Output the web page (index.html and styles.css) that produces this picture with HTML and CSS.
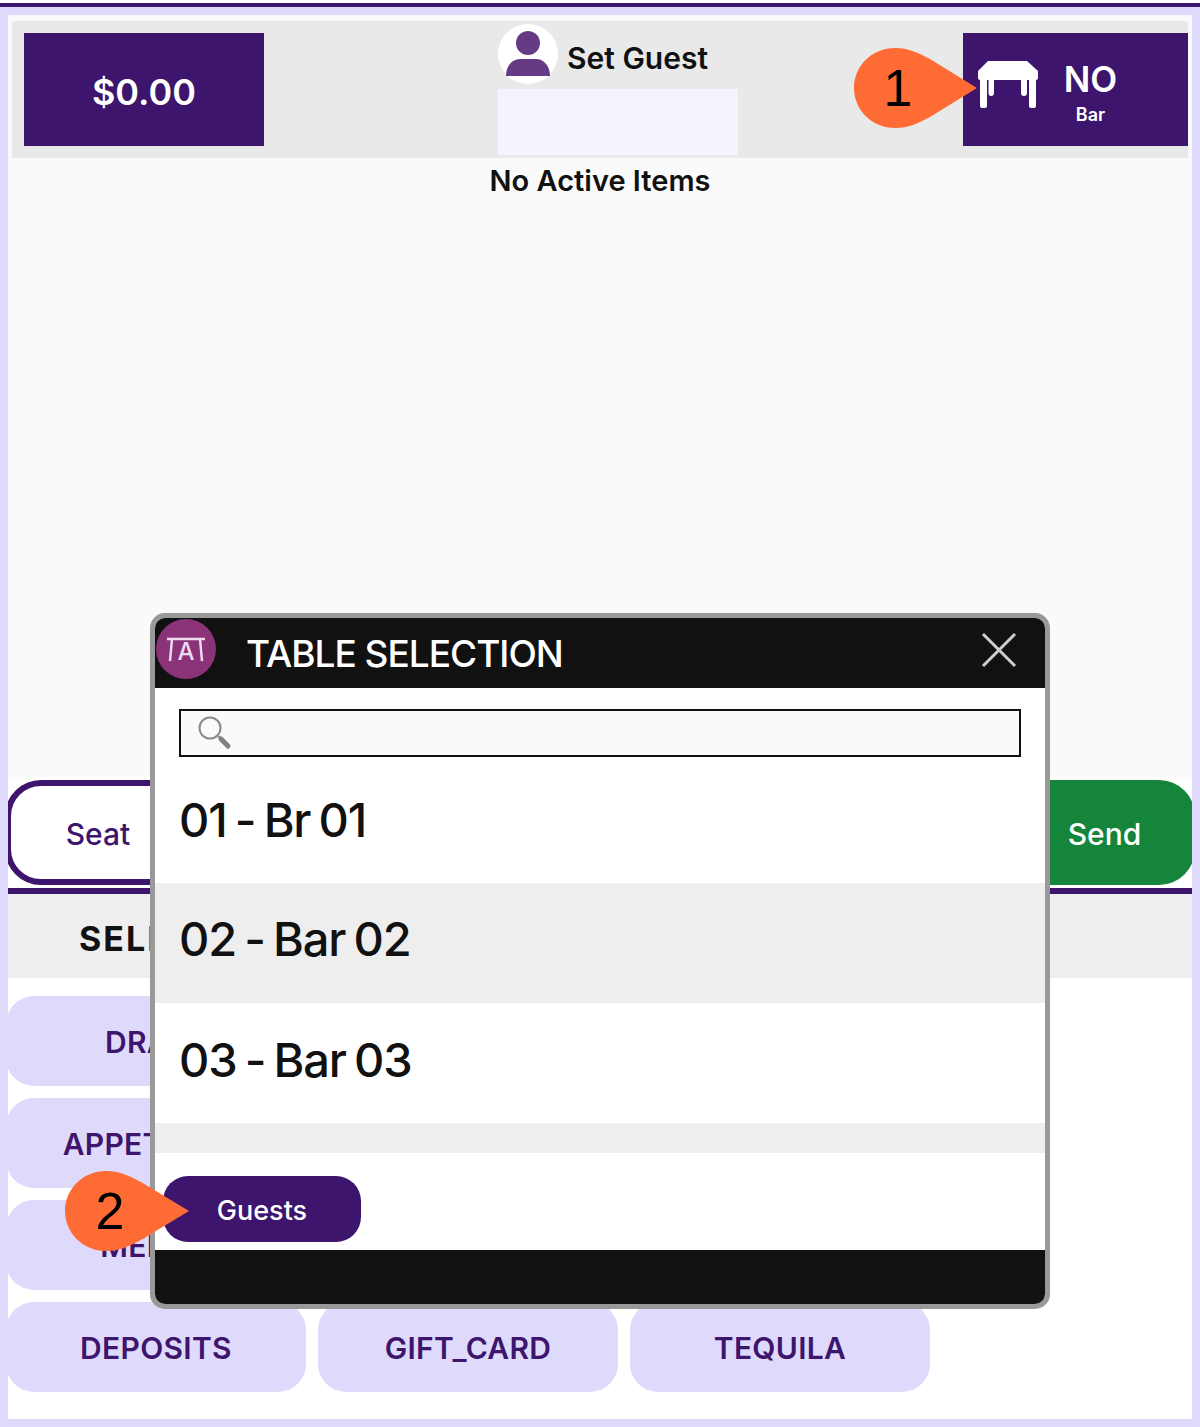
FILE: index.html
```html
<!DOCTYPE html>
<html lang="en">
	<head>
		<meta charset="UTF-8">
		<meta name="viewport" content="width=device-width, initial-scale=1.0">
		<title>Table Selection</title>
		<link rel="stylesheet" href="styles.css">
	</head>
	<body>
		<div class="frame">
			<div class="top">
				<div class="price">$0.00</div>
				<div class="guest">
					<div class="guest-head">
						<div class="guest-pic">
							<svg width="60" height="60" viewBox="0 0 60 60">
								<circle cx="30" cy="19" r="12" fill="#673a85"/>
								<path d="M8 52C8 41 15 35 22 35H38C45 35 52 41 52 52Z" fill="#673a85"/>
							</svg>
						</div>
						<span class="guest-name">Set Guest</span>
					</div>
					<div class="guest-box"></div>
				</div>
				<div class="table-btn">
					<svg width="60" height="47" viewBox="0 0 60 47">
						<path d="M10 0H49L60 10V17Q60 19 58 19H2Q0 19 0 17V10Z" fill="#fff"/>
						<path d="M2 19H9V45Q9 47 7 47H4Q2 47 2 45Z" fill="#fff"/>
						<path d="M51 19H58V45Q58 47 56 47H53Q51 47 51 45Z" fill="#fff"/>
						<path d="M10.5 19H16V32Q16 35 13 35Q10.5 35 10.5 32Z" fill="#fff"/>
						<path d="M43 19H49V32Q49 35 46 35Q43 35 43 32Z" fill="#fff"/>
					</svg>
					<div class="table-text">
						<div class="table-no">NO</div>
						<div class="table-area">Bar</div>
					</div>
				</div>
			</div>

			<div class="items">No Active Items</div>

			<div class="actions">
				<button class="btn-seat">Seat</button>
				<button class="btn-send">Send</button>
			</div>

			<div class="select-row">SELECT CATEGORY</div>

			<div class="cats">
				<div class="cat-row"><div class="cat">DRAFT</div></div>
				<div class="cat-row"><div class="cat">APPETIZERS</div></div>
				<div class="cat-row"><div class="cat">MERCH</div></div>
				<div class="cat-row">
					<div class="cat">DEPOSITS</div>
					<div class="cat">GIFT_CARD</div>
					<div class="cat">TEQUILA</div>
				</div>
			</div>
		</div>

		<!-- table popup -->
		<div class="modal">
			<div class="modal-head">
				<div class="modal-icon">
					<svg width="60" height="60" viewBox="0 0 60 60">
						<path d="M11 20H49M16 20L14 42M44 20L46 42" stroke="#eddcf0" stroke-width="2.5" fill="none"/>
						<text x="30" y="41" class="modal-icon-a">A</text>
					</svg>
				</div>
				<span class="modal-title">TABLE SELECTION</span>
				<svg class="modal-close" width="36" height="36" viewBox="0 0 36 36">
					<path d="M2 2L34 34M34 2L2 34" stroke="#cfcfcf" stroke-width="3"/>
				</svg>
			</div>
			<div class="search">
				<svg width="36" height="36" viewBox="0 0 36 36">
					<circle cx="13" cy="13" r="10.5" stroke="#8a8a8a" stroke-width="2" fill="none"/>
					<path d="M21 21L24 24" stroke="#8a8a8a" stroke-width="2"/>
					<path d="M24 24L31 31" stroke="#808080" stroke-width="5" stroke-linecap="round"/>
				</svg>
			</div>
			<div class="rows">
				<div class="row">01 - Br 01</div>
				<div class="row row-alt">02 - Bar 02</div>
				<div class="row">03 - Bar 03</div>
				<div class="row-empty"></div>
			</div>
			<div class="modal-actions">
				<button class="btn-guests">Guests</button>
			</div>
			<div class="modal-foot"></div>
		</div>

		<!-- numbered markers -->
		<div class="marker marker-1">
			<svg width="124" height="80" viewBox="0 0 124 80">
				<path d="M41 0C55 0 62 4 76 11L123 40L76 69C62 76 55 80 41 80C18 80 0 62 0 40C0 18 18 0 41 0Z" fill="#ff6b35"/>
			</svg>
			<span class="marker-num">1</span>
		</div>
		<div class="marker marker-2">
			<svg width="124" height="80" viewBox="0 0 124 80">
				<path d="M41 0C55 0 62 4 76 11L124 40L76 69C62 76 55 80 41 80C18 80 0 62 0 40C0 18 18 0 41 0Z" fill="#ff6b35"/>
			</svg>
			<span class="marker-num">2</span>
		</div>
	</body>
</html>
```

FILE: styles.css
```css
body{
	margin:0;
	padding-top:3px;
	background-color:#ffffff;
	font-family:Inter,"Liberation Sans",sans-serif;
	color:#111111;
}

button{
	font-family:inherit;
	cursor:pointer;
}

/*lavender page border, purple line on top*/
.frame{
	box-sizing:border-box;
	height:1420px;
	margin-top:4px;
	border:8px solid #dfdafc;
	box-shadow:0 -4px 0 #3d156d;
	background:#ffffff;
	overflow:hidden;
}

/*top bar*/
.top{
	display:flex;
	align-items:center;
	height:137px;
	border-top:6px solid #fafafa;
	border-left:4px solid #fafafa;
	border-right:4px solid #fafafa;
	background:#e9e9e9;
}

.price{
	width:240px;
	height:113px;
	padding-top:4px;
	box-sizing:border-box;
	margin-left:12px;
	background:#3d156d;
	color:#ffffff;
	font-size:36px;
	font-weight:600;
	display:flex;
	justify-content:center;
	align-items:center;
}

.guest{
	width:240px;
	margin-left:234px;
}

.guest-head{
	display:flex;
	align-items:center;
	gap:9px;
	height:60px;
	margin-bottom:5px;
}

.guest-pic{
	width:60px;
	height:60px;
	border-radius:50%;
	background:#ffffff;
}

.guest-name{
	font-size:30px;
	font-weight:600;
	margin-top:8px;
}

.guest-box{
	height:66px;
	background:#f5f3fe;
}

.table-btn{
	width:225px;
	height:113px;
	margin-left:auto;
	background:#3d156d;
	color:#ffffff;
	display:flex;
	align-items:center;
	box-sizing:border-box;
	padding-left:15px;
}

.table-btn svg{
	margin-top:-10px;
}

.table-text{
	flex:1;
	text-align:center;
	padding-right:45px;
	padding-top:7px;
}

.table-no{
	font-size:35px;
	font-weight:600;
	line-height:40px;
}

.table-area{
	margin-top:3px;
	font-size:18px;
	font-weight:600;
	line-height:26px;
}

/*order list*/
.items{
	height:619px;
	background:#fafafa;
	text-align:center;
	font-size:29px;
	font-weight:600;
	line-height:46px;
}

.actions{
	display:flex;
	justify-content:space-between;
	height:105px;
	padding:3px 0;
	border-bottom:6px solid #3d156d;
	overflow:hidden;
}

.btn-seat,.btn-send{
	width:260px;
	height:105px;
	padding-top:4px;
	font-size:30px;
	font-weight:500;
	border-radius:36px;
}

.btn-seat{
	margin-left:-3px;
	padding-right:80px;
	background:#ffffff;
	color:#3d156d;
	border:6px solid #3d156d;
}

.btn-send{
	margin-right:-3px;
	padding-left:85px;
	background:#14853a;
	color:#ffffff;
	border:none;
}

.select-row{
	height:84px;
	padding-left:71px;
	background:#eeeeee;
	font-size:34px;
	font-weight:700;
	letter-spacing:2px;
	line-height:90px;
}

/*categories*/
.cats{
	display:flex;
	flex-direction:column;
	gap:12px;
	padding-top:18px;
}

.cat-row{
	display:flex;
	gap:12px;
	margin-left:-2px;
}

.cat{
	width:300px;
	height:90px;
	box-sizing:border-box;
	padding-top:2px;
	border-radius:28px;
	background:#dfdafc;
	color:#3d156d;
	font-size:30px;
	font-weight:600;
	letter-spacing:0.3px;
	display:flex;
	justify-content:center;
	align-items:center;
}

/*popup*/
.modal{
	position:absolute;
	left:150px;
	top:613px;
	width:900px;
	height:696px;
	box-sizing:border-box;
	border:5px solid #999999;
	border-radius:15px;
	background:#ffffff;
	overflow:hidden;
	display:flex;
	flex-direction:column;
}

.modal-head{
	position:relative;
	flex:none;
	height:70px;
	background:#111111;
	display:flex;
	align-items:center;
	color:#ffffff;
}

.modal-icon{
	width:60px;
	height:60px;
	margin:-8px 0 0 1px;
	border-radius:50%;
	background:#8b3379;
}

.modal-icon-a{
	font-family:Inter,"Liberation Sans",sans-serif;
	font-size:24px;
	font-weight:500;
	fill:#eddcf0;
	text-anchor:middle;
}

.modal-title{
	margin-left:30px;
	font-size:37px;
	font-weight:500;
	letter-spacing:-1px;
}

.modal-close{
	position:absolute;
	right:28px;
	top:14px;
}

.search{
	flex:none;
	height:40px;
	margin:21px 24px 6px;
	border:2px solid #111111;
	background:#fafafa;
	padding-left:16px;
	padding-top:4px;
}

.rows{
	flex:none;
}

.row{
	height:120px;
	padding-left:24px;
	font-size:47px;
	font-weight:500;
	line-height:114px;
	letter-spacing:-1.2px;
	word-spacing:-3px;
}

.row-alt{
	background:#eeeeee;
	line-height:112px;
}

.row-empty{
	height:30px;
	background:#eeeeee;
}

.modal-actions{
	flex:1;
	padding:23px 0 0 8px;
}

.btn-guests{
	width:198px;
	height:66px;
	padding-top:3px;
	border:none;
	border-radius:25px;
	background:#3d156d;
	color:#ffffff;
	font-size:27px;
	font-weight:500;
}

.modal-foot{
	flex:none;
	height:54px;
	background:#111111;
}

/*numbered markers*/
.marker{
	position:absolute;
	width:124px;
	height:80px;
}

.marker svg{
	display:block;
}

.marker-1{
	left:854px;
	top:48px;
}

.marker-2{
	left:65px;
	top:1171px;
}

.marker-num{
	position:absolute;
	left:0;
	top:0;
	width:88px;
	text-align:center;
	font-family:"Liberation Sans",sans-serif;
	font-size:52px;
	line-height:80px;
	color:#000000;
}

.marker-2 .marker-num{
	width:90px;
}
```
